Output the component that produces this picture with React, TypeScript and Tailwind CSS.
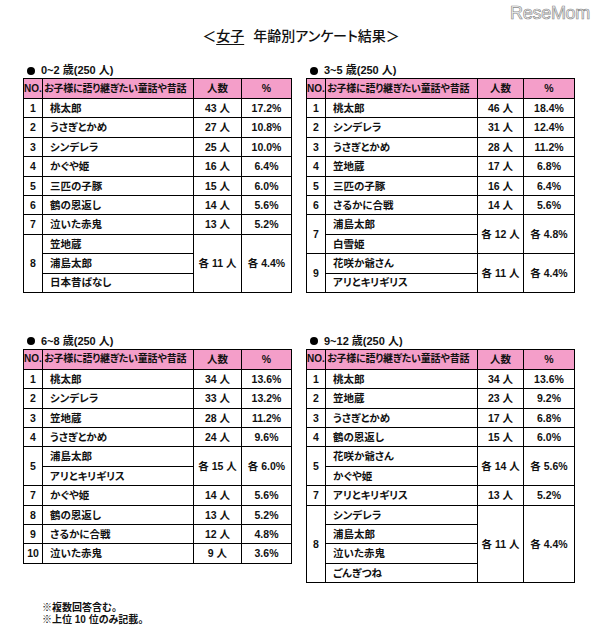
import React from 'react';

type Row = { no: string; titles: string[]; count: string; pct: string };
type Survey = { label: string; cols: string; rows: Row[] };

const spanClass: Record<number, string> = {
    1: 'row-span-1',
    2: 'row-span-2',
    3: 'row-span-3',
    4: 'row-span-4',
};

const surveys: Survey[] = [
    {
        label: '0~2 歳(250 人)',
        cols: 'grid-cols-[19px_151px_48px_50px]',
        rows: [
            { no: '1', titles: ['桃太郎'], count: '43 人', pct: '17.2%' },
            { no: '2', titles: ['うさぎとかめ'], count: '27 人', pct: '10.8%' },
            { no: '3', titles: ['シンデレラ'], count: '25 人', pct: '10.0%' },
            { no: '4', titles: ['かぐや姫'], count: '16 人', pct: '6.4%' },
            { no: '5', titles: ['三匹の子豚'], count: '15 人', pct: '6.0%' },
            { no: '6', titles: ['鶴の恩返し'], count: '14 人', pct: '5.6%' },
            { no: '7', titles: ['泣いた赤鬼'], count: '13 人', pct: '5.2%' },
            { no: '8', titles: ['笠地蔵', '浦島太郎', '日本昔ばなし'], count: '各 11 人', pct: '各 4.4%' },
        ],
    },
    {
        label: '3~5 歳(250 人)',
        cols: 'grid-cols-[19px_152px_46px_51px]',
        rows: [
            { no: '1', titles: ['桃太郎'], count: '46 人', pct: '18.4%' },
            { no: '2', titles: ['シンデレラ'], count: '31 人', pct: '12.4%' },
            { no: '3', titles: ['うさぎとかめ'], count: '28 人', pct: '11.2%' },
            { no: '4', titles: ['笠地蔵'], count: '17 人', pct: '6.8%' },
            { no: '5', titles: ['三匹の子豚'], count: '16 人', pct: '6.4%' },
            { no: '6', titles: ['さるかに合戦'], count: '14 人', pct: '5.6%' },
            { no: '7', titles: ['浦島太郎', '白雪姫'], count: '各 12 人', pct: '各 4.8%' },
            { no: '9', titles: ['花咲か爺さん', 'アリとキリギリス'], count: '各 11 人', pct: '各 4.4%' },
        ],
    },
    {
        label: '6~8 歳(250 人)',
        cols: 'grid-cols-[19px_151px_48px_50px]',
        rows: [
            { no: '1', titles: ['桃太郎'], count: '34 人', pct: '13.6%' },
            { no: '2', titles: ['シンデレラ'], count: '33 人', pct: '13.2%' },
            { no: '3', titles: ['笠地蔵'], count: '28 人', pct: '11.2%' },
            { no: '4', titles: ['うさぎとかめ'], count: '24 人', pct: '9.6%' },
            { no: '5', titles: ['浦島太郎', 'アリとキリギリス'], count: '各 15 人', pct: '各 6.0%' },
            { no: '7', titles: ['かぐや姫'], count: '14 人', pct: '5.6%' },
            { no: '8', titles: ['鶴の恩返し'], count: '13 人', pct: '5.2%' },
            { no: '9', titles: ['さるかに合戦'], count: '12 人', pct: '4.8%' },
            { no: '10', titles: ['泣いた赤鬼'], count: '9 人', pct: '3.6%' },
        ],
    },
    {
        label: '9~12 歳(250 人)',
        cols: 'grid-cols-[19px_152px_46px_51px]',
        rows: [
            { no: '1', titles: ['桃太郎'], count: '34 人', pct: '13.6%' },
            { no: '2', titles: ['笠地蔵'], count: '23 人', pct: '9.2%' },
            { no: '3', titles: ['うさぎとかめ'], count: '17 人', pct: '6.8%' },
            { no: '4', titles: ['鶴の恩返し'], count: '15 人', pct: '6.0%' },
            { no: '5', titles: ['花咲か爺さん', 'かぐや姫'], count: '各 14 人', pct: '各 5.6%' },
            { no: '7', titles: ['アリとキリギリス'], count: '13 人', pct: '5.2%' },
            { no: '8', titles: ['シンデレラ', '浦島太郎', '泣いた赤鬼', 'ごんぎつね'], count: '各 11 人', pct: '各 4.4%' },
        ],
    },
];

const cell = 'border-r border-b border-black flex items-center';

const SurveyTable: React.FC<{ survey: Survey }> = ({ survey }) => (
    <div className="flex flex-col">
        {/* section label */}
        <div className="h-[15px] pl-[4px] flex items-center text-[11px] leading-[15px] font-bold whitespace-nowrap">
            <span className="w-[8px] h-[8px] rounded-full bg-black mr-[6px]" />
            {survey.label}
        </div>

        <div className={`grid ${survey.cols} grid-rows-[20px] auto-rows-[19.4px] w-fit border-t border-l border-black`}>
            {/* header */}
            <div className={`${cell} bg-[#f49ec9] justify-center text-[10px] font-bold`}>NO.</div>
            <div className={`${cell} bg-[#f49ec9] pl-[1px] text-[10px] font-bold whitespace-nowrap overflow-hidden tracking-[-0.2px]`}>
                お子様に語り継ぎたい童話や昔話
            </div>
            <div className={`${cell} bg-[#f49ec9] justify-center text-[10.5px] font-bold`}>人数</div>
            <div className={`${cell} bg-[#f49ec9] justify-center text-[10.5px] font-bold`}>%</div>

            {survey.rows.map((r) => {
                const span = spanClass[r.titles.length];
                return (
                    <React.Fragment key={r.no}>
                        <div className={`${cell} ${span} justify-center`}>{r.no}</div>
                        <div className={`${cell} col-start-2 pl-[7px] whitespace-nowrap`}>{r.titles[0]}</div>
                        <div className={`${cell} ${span} justify-center whitespace-nowrap`}>{r.count}</div>
                        <div className={`${cell} ${span} justify-center whitespace-nowrap`}>{r.pct}</div>
                        {r.titles.slice(1).map((t) => (
                            <div key={t} className={`${cell} col-start-2 pl-[7px] whitespace-nowrap`}>{t}</div>
                        ))}
                    </React.Fragment>
                );
            })}
        </div>
    </div>
);

export default function App() {
    return (
        <div className="w-[596px] h-[640px] bg-white text-[#111] font-['Liberation_Sans','Noto_Sans_CJK_JP',sans-serif] [font-feature-settings:'palt'] text-[10.5px] font-bold leading-none overflow-hidden">

            {/* logo */}
            <div className="h-[26px] flex justify-end pt-[3px] pr-[6px]">
                <span className="text-[18px] leading-[20px] font-normal tracking-[-0.3px] text-transparent [-webkit-text-stroke:0.7px_#8c8c8c]">
                    ReseMom
                </span>
            </div>

            {/* title */}
            <div className="h-[20px] flex justify-center pl-[6px] text-[14px] leading-[20px] font-medium">
                <span>＜<span className="underline underline-offset-[3px]">女子</span><span className="ml-[9px]">年齢別アンケート結果</span>＞</span>
            </div>

            {/* tables */}
            <div className="mt-[17px] pl-[23px] grid grid-cols-[268px_268px] gap-x-[15px] gap-y-[41px] items-start">
                {surveys.map((s) => (
                    <SurveyTable key={s.label} survey={s} />
                ))}
            </div>

            {/* notes */}
            <div className="mt-[19px] pl-[42px] text-[10px] leading-[12px] font-bold">
                <div>※複数回答含む。</div>
                <div>※上位 10 位のみ記載。</div>
            </div>
        </div>
    );
}
